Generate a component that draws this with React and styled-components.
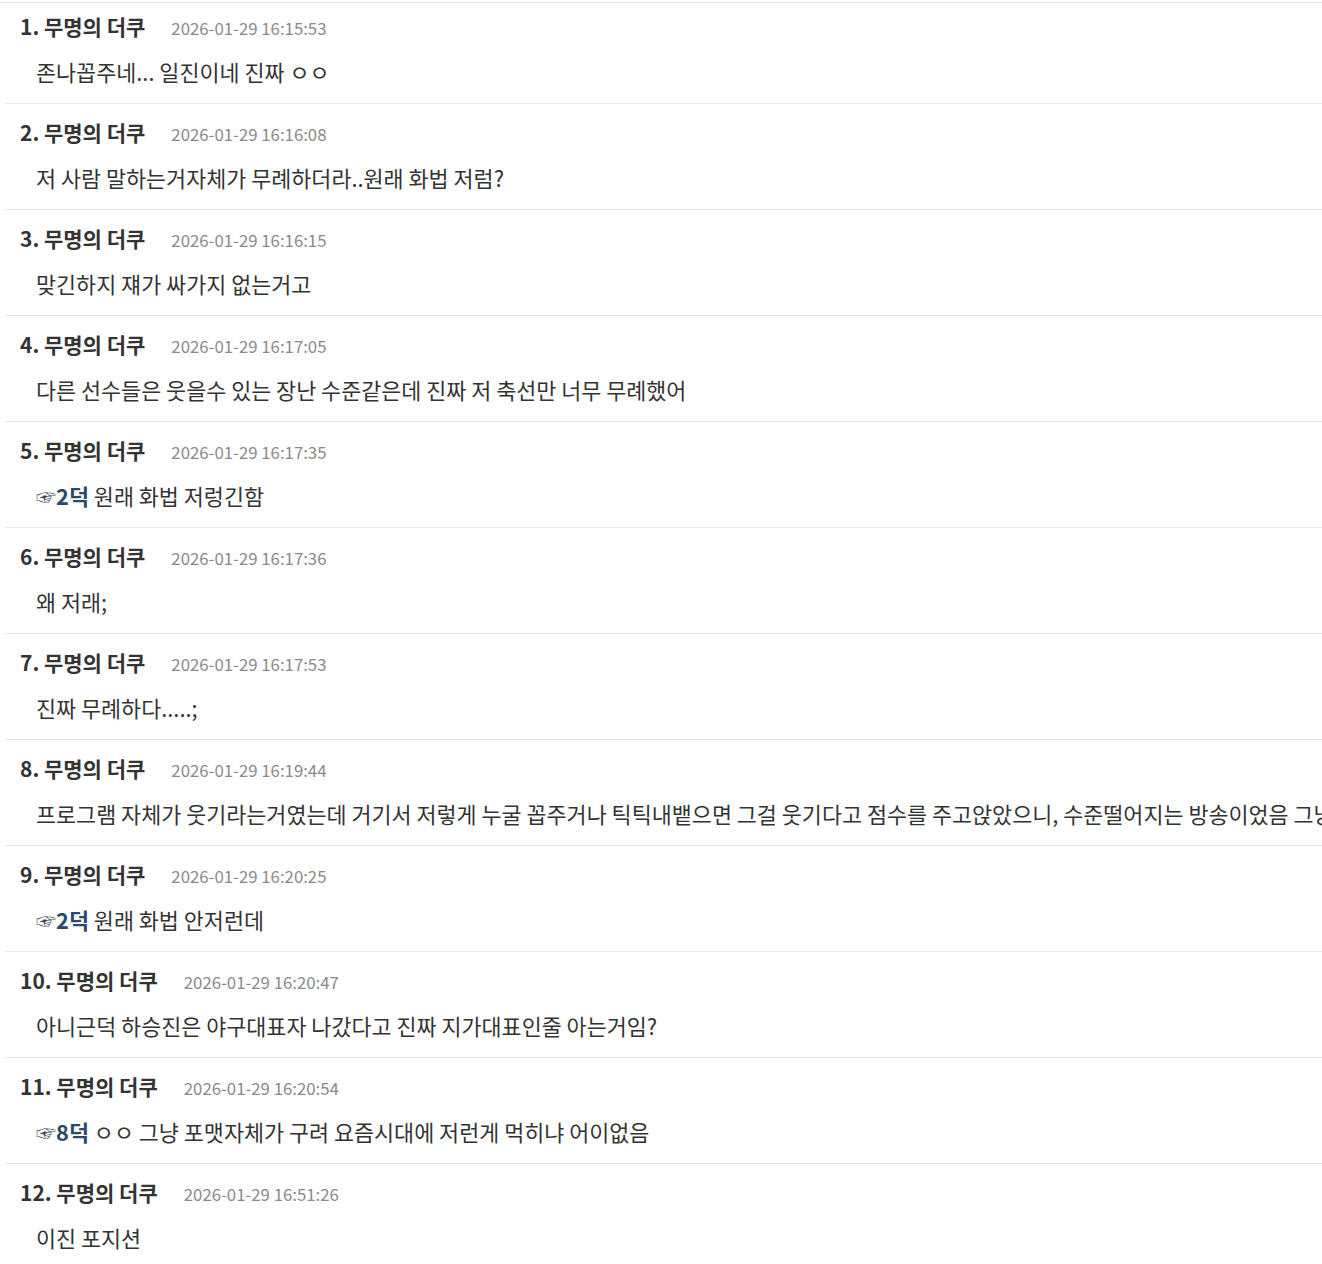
import React from "react";
import styled, { createGlobalStyle } from "styled-components";

const GlobalStyle = createGlobalStyle`
  html, body {
    margin: 0;
    padding: 0;
    background: #ffffff;
    overflow: hidden;
  }
  body {
    font-family: "Noto Sans CJK KR", "Noto Sans", sans-serif;
  }
`;

const comments = [
  { no: 1, time: "2026-01-29 16:15:53", text: "존나꼽주네... 일진이네 진짜 ㅇㅇ" },
  { no: 2, time: "2026-01-29 16:16:08", text: "저 사람 말하는거자체가 무례하더라..원래 화법 저럼?" },
  { no: 3, time: "2026-01-29 16:16:15", text: "맞긴하지 쟤가 싸가지 없는거고" },
  { no: 4, time: "2026-01-29 16:17:05", text: "다른 선수들은 웃을수 있는 장난 수준같은데 진짜 저 축선만 너무 무례했어" },
  { no: 5, time: "2026-01-29 16:17:35", reply: 2, text: "원래 화법 저렁긴함" },
  { no: 6, time: "2026-01-29 16:17:36", text: "왜 저래;" },
  { no: 7, time: "2026-01-29 16:17:53", text: "진짜 무례하다.....;" },
  {
    no: 8,
    time: "2026-01-29 16:19:44",
    text: "프로그램 자체가 웃기라는거였는데 거기서 저렇게 누굴 꼽주거나 틱틱내뱉으면 그걸 웃기다고 점수를 주고앉았으니, 수준떨어지는 방송이었음 그냥",
  },
  { no: 9, time: "2026-01-29 16:20:25", reply: 2, text: "원래 화법 안저런데" },
  { no: 10, time: "2026-01-29 16:20:47", text: "아니근덕 하승진은 야구대표자 나갔다고 진짜 지가대표인줄 아는거임?" },
  { no: 11, time: "2026-01-29 16:20:54", reply: 8, text: "ㅇㅇ 그냥 포맷자체가 구려 요즘시대에 저런게 먹히냐 어이없음" },
  { no: 12, time: "2026-01-29 16:51:26", text: "이진 포지션" },
];

function Comment({ no, time, text, reply }) {
  return (
    <Row>
      <Head>
        <Name>{no}. 무명의 더쿠</Name>
        <Time>{time}</Time>
      </Head>
      <Body>
        {reply && (
          <>
            <Hand>☞</Hand>
            <Anchor>{reply}덕</Anchor>{" "}
          </>
        )}
        {text}
      </Body>
    </Row>
  );
}

export default function App() {
  return (
    <>
      <GlobalStyle />
      <List>
        {comments.map((c) => (
          <Comment key={c.no} {...c} />
        ))}
      </List>
    </>
  );
}

const List = styled.ul`
  list-style: none;
  margin: 2px 0 0;
  padding: 0 0 0 5px;
  width: 1400px;
  border-top: 1px solid #e6e6e6;
`;

const Row = styled.li`
  height: 105px;
  box-sizing: content-box;
  border-top: 1px solid #e6e6e6;
  padding: 0 15px;
  white-space: nowrap;
  &:first-child {
    border-top: none;
    margin-top: -5px;
  }
`;

const Head = styled.div`
  display: flex;
  align-items: baseline;
  gap: 26px;
  padding-top: 14px;
  height: 28px;
  line-height: 28px;
`;

const Name = styled.span`
  font-size: 21px;
  font-weight: 700;
  color: #333333;
`;

const Time = styled.span`
  font-size: 16.8px;
  color: #8a8a8a;
`;

const Body = styled.div`
  margin-top: 17px;
  padding-left: 16px;
  font-size: 21.8px;
  line-height: 30px;
  color: #333333;
`;

const Hand = styled.span`
  font-size: 20px;
  color: #2e3e50;
`;

const Anchor = styled.b`
  font-weight: 700;
  color: #2b4a6b;
`;
